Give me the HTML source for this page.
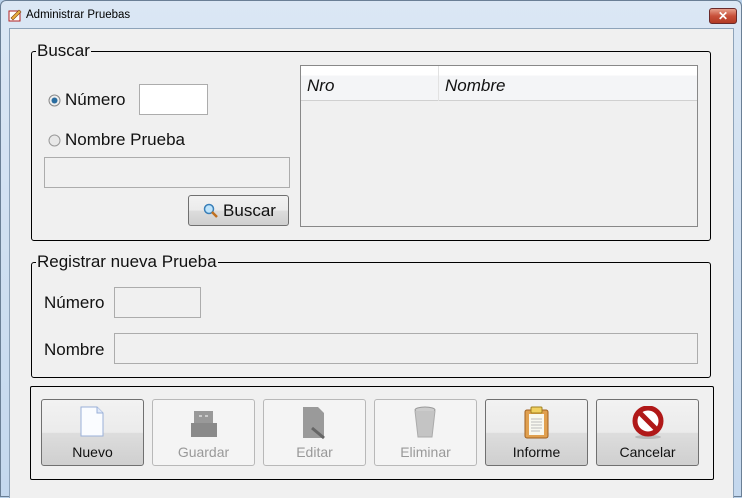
<!DOCTYPE html>
<html><head><meta charset="utf-8"><style>
*{box-sizing:border-box;margin:0;padding:0}
body{width:742px;height:497px;overflow:hidden;background:#b9d1ea;font-family:"Liberation Sans",sans-serif;position:relative}
.win{position:absolute;left:0;top:0;width:742px;height:497px;background:linear-gradient(#dbe7f4,#c4d8ee);border:1px solid #6a7f95;border-radius:6px 6px 0 0}
.title{position:absolute;left:25px;top:8px;font-size:11.5px;color:#000}
.close{position:absolute;left:708px;top:7px;width:28px;height:16px;border:1px solid #6a2a2a;border-radius:3px;background:linear-gradient(#e8a08c,#c8503a 50%,#b23a24);color:#fff;font-size:12px;font-weight:bold;text-align:center;line-height:14px}
.content{position:absolute;left:8px;top:27px;width:725px;height:470px;background:#f0f0f0;border:1px solid #8ea3b9;border-bottom:none}
.gb{position:absolute;border:1px solid #000;border-radius:3px}
.lg{position:absolute;background:#f0f0f0;font-size:17px;padding:0 1px;color:#111}
.t{position:absolute;font-size:17px;color:#111}
.in{position:absolute;border:1px solid #acacac;background:#f0f0f0}
.btn{position:absolute;top:399px;width:103px;height:67px;border:1px solid #b8b8b8;border-radius:3px;background:#f4f4f4;font-size:14px;color:#999;text-align:center}
.btn.en{border-color:#707070;background:linear-gradient(#f2f2f2 0,#ebebeb 50%,#dddddd 51%,#cfcfcf);color:#111}
.btn span{position:absolute;left:0;right:0;top:44px}
.btn svg{position:absolute;left:36px;top:6px}
</style></head><body>
<div class="win">
<svg style="position:absolute;left:7px;top:7px" width="14" height="14"><rect x="1" y="3" width="11" height="10" fill="#fff" stroke="#b02020"/><path d="M3 10 L11 2 L13 4 L5 12Z" fill="#e8b040" stroke="#804010" stroke-width=".6"/></svg>
<div class="title">Administrar Pruebas</div>
<div class="close">✕</div>
<div class="content"></div>
</div>

<div class="gb" style="left:31px;top:51px;width:680px;height:190px"></div>
<div class="lg" style="left:36px;top:41px">Buscar</div>
<svg style="position:absolute;left:48px;top:94px" width="13" height="13"><circle cx="6.5" cy="6.5" r="5.5" fill="#eee" stroke="#888"/><circle cx="6.5" cy="6.5" r="3" fill="#2a6da0"/></svg>
<div class="t" style="left:65px;top:90px">Número</div>
<div class="in" style="left:139px;top:84px;width:69px;height:31px;background:#fff"></div>
<svg style="position:absolute;left:48px;top:134px" width="13" height="13"><circle cx="6.5" cy="6.5" r="5.5" fill="#e8e8e8" stroke="#999"/></svg>
<div class="t" style="left:65px;top:130px">Nombre Prueba</div>
<div class="in" style="left:44px;top:157px;width:246px;height:31px"></div>
<div class="btn en" style="left:188px;top:195px;width:101px;height:31px;font-size:17px">
<svg style="left:14px;top:7px" width="16" height="16"><circle cx="6" cy="6" r="4.5" fill="#bfe4fb" stroke="#3a7fb8" stroke-width="1.5"/><path d="M9 9 L14 14" stroke="#c07020" stroke-width="2.5"/></svg>
<span style="top:5px;left:22px">Buscar</span></div>
<div style="position:absolute;left:300px;top:65px;width:398px;height:162px;border:1px solid #888;background:#f0f0f0">
<div style="height:35px;background:linear-gradient(#fff 0,#fff 9px,#f4f5f7 10px,#f4f5f7);border-bottom:1px solid #d0d0d0;position:relative">
<div style="position:absolute;left:137px;top:0;height:35px;border-left:1px solid #e2e2e2"></div>
<div class="t" style="left:6px;top:10px;font-style:italic">Nro</div>
<div class="t" style="left:144px;top:10px;font-style:italic">Nombre</div>
</div></div>

<div class="gb" style="left:31px;top:262px;width:680px;height:116px"></div>
<div class="lg" style="left:36px;top:252px">Registrar nueva Prueba</div>
<div class="t" style="left:44px;top:293px">Número</div>
<div class="in" style="left:114px;top:287px;width:87px;height:31px"></div>
<div class="t" style="left:44px;top:340px">Nombre</div>
<div class="in" style="left:114px;top:333px;width:584px;height:31px"></div>

<div class="gb" style="left:30px;top:386px;width:684px;height:94px;border-radius:2px"></div>
<div class="btn en" style="left:41px"><svg width="30" height="32"><path d="M3 1 H19 L25 7 V30 H3Z" fill="#fafcff" stroke="#9ab0d8"/><path d="M19 1 V7 H25" fill="#dfe8f8" stroke="#9ab0d8"/></svg><span>Nuevo</span></div>
<div class="btn" style="left:152px"><svg width="30" height="32"><rect x="5" y="5" width="19" height="14" fill="#999"/><rect x="2" y="17" width="26" height="14" fill="#8a8a8a"/><rect x="10" y="9" width="3" height="2" fill="#ccc"/><rect x="16" y="9" width="3" height="2" fill="#ccc"/></svg><span>Guardar</span></div>
<div class="btn" style="left:263px"><svg width="30" height="34"><path d="M3 1 H18 L24 7 V32 H3Z" fill="#9a9a9a"/><path d="M12 22 L24 32" stroke="#666" stroke-width="3"/></svg><span>Editar</span></div>
<div class="btn" style="left:374px"><svg width="30" height="34"><ellipse cx="14" cy="4" rx="10" ry="3" fill="#ccc" stroke="#999"/><path d="M4 5 L7 31 H21 L24 5" fill="#c4c4c4" stroke="#aaa"/></svg><span>Eliminar</span></div>
<div class="btn en" style="left:485px"><svg width="30" height="34"><rect x="3" y="4" width="23" height="28" rx="2" fill="#e0a050" stroke="#a06020"/><rect x="7" y="8" width="15" height="21" fill="#f8f8f0"/><rect x="9" y="1" width="11" height="6" rx="1" fill="#f0d060" stroke="#a08020"/><path d="M9 13H20M9 16H20M9 19H20M9 22H20M9 25H18" stroke="#bbb"/></svg><span>Informe</span></div>
<div class="btn en" style="left:596px"><svg width="34" height="34" style="left:34px"><ellipse cx="17" cy="31" rx="13" ry="2" fill="#888" opacity=".4"/><circle cx="17" cy="15" r="13" fill="#fff" stroke="#b01818" stroke-width="5"/><path d="M8 6 L26 24" stroke="#b01818" stroke-width="5"/></svg><span>Cancelar</span></div>
</body></html>
